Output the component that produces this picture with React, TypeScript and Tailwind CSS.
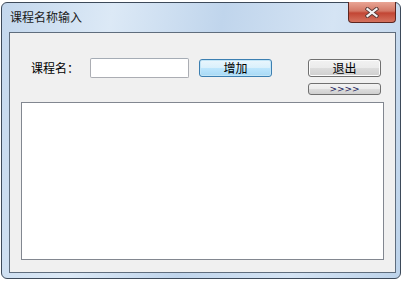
import React from 'react';

const cjk = { fontFamily: '"Noto Sans CJK SC", "Noto Sans", sans-serif' };

export default function App() {
  return (
    <div className="w-[404px] h-[282px] bg-white relative overflow-hidden" style={cjk}>
      {/* window frame */}
      <div className="absolute left-[1px] top-[2px] w-[400px] h-[277px] rounded-[6px] border border-[#3d4a5a] bg-[linear-gradient(100deg,#c3d7ed_0%,#dce9f6_25%,#c0d5ec_50%,#d5e4f4_75%,#bdd3ea_100%)] flex flex-col pl-[7px] pr-[4px] pb-[5px]">
        {/* title bar */}
        <div className="h-[29px] flex items-center relative">
          <span className="text-[12px] text-[#1b1b1b] leading-none ml-[1px] -mt-[2px]">课程名称输入</span>
          {/* close button */}
          <div className="absolute right-[0px] -top-[1px] w-[48px] h-[21px] rounded-b-[4px] border border-t-0 border-[#5c2620] bg-[linear-gradient(#e9a595_0%,#d37866_45%,#c24634_55%,#d5735f_100%)] flex items-center justify-center">
            <svg width="14" height="11" viewBox="0 0 14 11">
              <path d="M2.5 2 L11.5 9 M11.5 2 L2.5 9" stroke="#5a3a36" strokeWidth="4" strokeLinecap="square" />
              <path d="M2.5 2 L11.5 9 M11.5 2 L2.5 9" stroke="#f4f4f4" strokeWidth="2.2" strokeLinecap="square" />
            </svg>
          </div>
        </div>
        {/* client area */}
        <div className="flex-1 border border-[#5f6d7d] bg-[#f0f0f0] flex flex-col pl-[11px] pt-[25px]">
          <div className="h-[44px] flex items-start">
            <div className="w-[59px] h-[20px] ml-[10px] flex items-center text-[12px] text-black leading-none">课程名：</div>
            <div className="w-[99px] h-[20px] bg-white border border-[#abadb3] border-t-[#a5acb5] rounded-[2px]" />
            <div className="ml-[10px] mt-[1px] w-[73px] h-[18px] rounded-[3px] border border-[#3c7fb1] bg-[linear-gradient(#eaf6fd_0%,#d9f0fc_50%,#bee6fd_50%,#a7d9f5_100%)] shadow-[inset_0_0_0_1px_#c2e5f7] flex items-center justify-center text-[12px] text-black leading-none">增加</div>
            <div className="ml-[36px] mt-[1px] flex flex-col gap-[6px]">
              <div className="w-[73px] h-[18px] rounded-[3px] border border-[#707070] bg-[linear-gradient(#f2f2f2_0%,#ebebeb_50%,#dddddd_50%,#cfcfcf_100%)] shadow-[inset_0_0_0_1px_#fcfcfc] flex items-center justify-center text-[12px] text-black leading-none">退出</div>
              <div className="w-[73px] h-[12px] rounded-[3px] border border-[#707070] bg-[linear-gradient(#f2f2f2_0%,#ebebeb_50%,#dddddd_50%,#cfcfcf_100%)] flex items-center justify-center text-[9px] text-[#1a1a5a] leading-none" style={{ fontFamily: '"DejaVu Sans", sans-serif' }}>&gt;&gt;&gt;&gt;</div>
            </div>
          </div>
          <div className="w-[363px] h-[158px] bg-white border border-[#828790]" />
        </div>
      </div>
    </div>
  );
}
